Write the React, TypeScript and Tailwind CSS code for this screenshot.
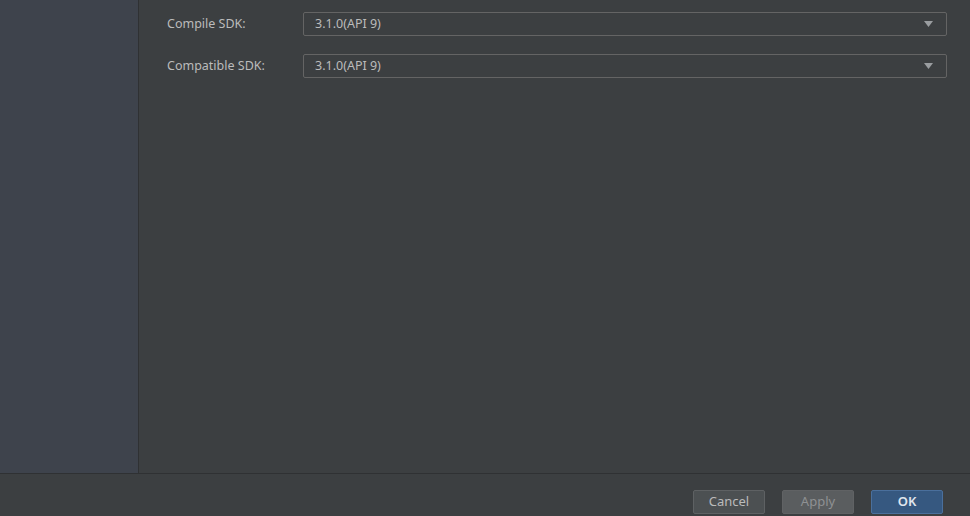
function SdkSelect({ label, value }: { label: string; value: string }) {
  return (
    <div className="flex items-center">
      <span className="w-[136px] text-[12.5px] text-[#bbbbbb]">{label}</span>
      <div className="flex h-6 flex-1 items-center justify-between rounded-[2px] border border-[#646464] bg-[#3c3f41] pl-[11px] pr-[13px]">
        <span className="text-[12.5px] text-[#bbbbbb]">{value}</span>
        <svg width="9" height="6" viewBox="0 0 9 6" aria-hidden>
          <path d="M0 0h9L4.5 6z" fill="#9a9da0" />
        </svg>
      </div>
    </div>
  )
}

export default function App() {
  return (
    <div
      className="flex h-[516px] w-[970px] flex-col bg-[#3c3f41]"
      style={{ fontFamily: '"Microsoft YaHei", "Noto Sans", "Liberation Sans", sans-serif' }}
    >
      <div className="flex flex-1 border-b border-[#2f3133]">
        <aside className="w-[139px] border-r border-[#2f3133] bg-[#3e434c]" />
        <main className="flex flex-1 flex-col gap-[18px] pl-[28px] pr-[23px] pt-[12px]">
          <SdkSelect label="Compile SDK:" value="3.1.0(API 9)" />
          <SdkSelect label="Compatible SDK:" value="3.1.0(API 9)" />
        </main>
      </div>
      <footer className="flex h-[42px] items-start justify-end gap-[17px] pr-[27px] pt-[16px]">
        <button className="h-6 w-[72px] rounded-[2px] border border-[#5e6163] bg-[#4c5052] text-[13px] text-[#bbbbbb]">
          Cancel
        </button>
        <button className="h-6 w-[72px] rounded-[2px] border border-[#606264] bg-[#5a5d5f] text-[13px] text-[#8f9193]">
          Apply
        </button>
        <button className="h-6 w-[72px] rounded-[2px] border border-[#4a6f9c] bg-[#365880] text-[13px] font-semibold text-[#e0e6ee]">
          OK
        </button>
      </footer>
    </div>
  )
}
